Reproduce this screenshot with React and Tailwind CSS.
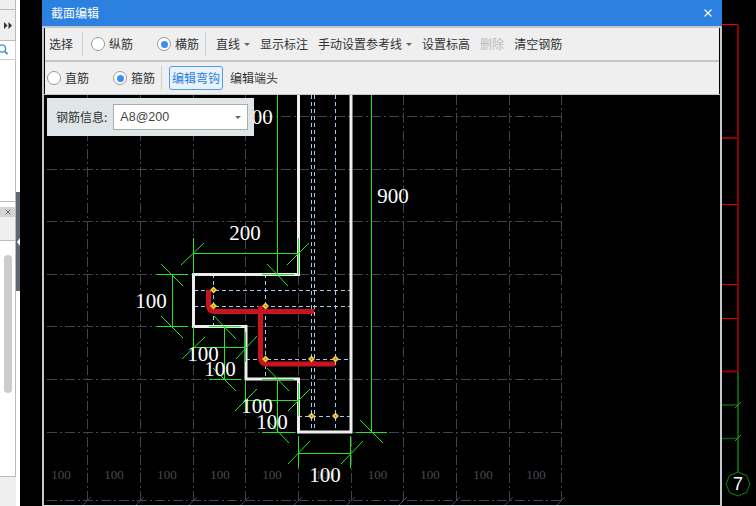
import { X } from "lucide-react";

const cjk = "font-['Noto_Sans_CJK_SC','Liberation_Sans',sans-serif]";

const gridX = [87, 140, 193, 245, 298, 351, 403, 456, 509, 561];
const gridY = [116, 169, 221, 274, 326, 379, 432, 500];
const grayLabels = [61, 114, 167, 220, 272, 325, 377.5, 430, 483, 536];

// snap straight lines onto a pixel so they stay sharp
const snap = ([x1, y1, x2, y2]) => {
  if (x1 === x2) return [Math.floor(x1) + 0.5, y1, Math.floor(x2) + 0.5, y2];
  if (y1 === y2) return [x1, Math.floor(y1) + 0.5, x2, Math.floor(y2) + 0.5];
  return [x1, y1, x2, y2];
};

// green dimension lines: [x1, y1, x2, y2]
const greenLines = [
  [277, 95, 277, 274], [371, 95, 371, 432],
  [193, 238, 193, 274], [298, 238, 298, 274], [193, 253, 298, 253],
  [181, 265, 204, 243], [287, 265, 309, 243],
  [262, 274, 294, 274], [267, 264, 288, 286],
  [172, 274, 172, 327], [157, 274, 188, 274], [157, 326, 188, 326],
  [161, 264, 183, 286], [161, 316, 183, 338],
  [209, 326, 241, 326], [224, 327, 224, 379], [214, 316, 236, 339],
  [209, 379, 241, 379], [213, 368, 236, 391],
  [193, 327, 193, 362], [245, 332, 245, 362], [193, 347, 246, 347],
  [182, 359, 205, 337], [236, 359, 257, 336],
  [245, 380, 245, 412], [298, 383, 298, 416], [246, 400, 298, 400],
  [235, 411, 257, 389], [288, 411, 310, 389],
  [277, 379, 277, 432], [262, 379, 294, 379], [267, 368, 289, 391],
  [262, 432, 295, 432], [267, 420, 289, 443],
  [356, 432, 387, 432], [360, 420, 383, 443],
  [298, 436, 298, 468], [350, 436, 350, 468], [298, 453, 350, 453],
  [288, 464, 310, 441], [341, 464, 363, 441],
].map(snap);

const refLines = [
  [311, 95, 311, 432], [314, 95, 314, 432], [335, 95, 335, 432],
  [194, 290, 350, 290], [194, 306, 350, 306],
  [246, 359, 350, 359], [298, 416, 350, 416],
  [213, 274, 213, 327], [265, 274, 265, 379],
].map(snap);

const nodes = [
  [213.5, 290], [213.5, 306], [265.5, 306], [265.5, 359], [311.5, 359], [335.5, 359], [311.5, 416], [335.5, 416],
];

const whiteLabels = [
  [257, 124, "200"], [245, 240, "200"], [393, 203, "900"], [151, 308, "100"],
  [203, 361, "100"], [220, 376, "100"], [257, 413, "100"], [272, 429, "100"], [325, 482, "100"],
];

const Radio = ({ checked }) => (
  <span className="flex h-[14px] w-[14px] items-center justify-center rounded-full border border-[#999] bg-white">
    {checked && <span className="h-[7px] w-[7px] rounded-full bg-[#3c8ef0]" />}
  </span>
);

const Caret = () => (
  <span className="ml-[4px] h-0 w-0 border-x-[3px] border-t-[3px] border-x-transparent border-t-[#666]" />
);

const Sep = ({ className }) => <span className={`h-[24px] w-px bg-[#d0d0d0] ${className}`} />;

const Sidebar = () => (
  <div className="flex h-full w-[16px] flex-col">
    <div className="h-[10px] border-r border-b border-[#bbb] bg-[#efefef]" />
    <div className="flex h-[31px] items-center justify-center border-r border-b border-[#bbb] bg-[#efefef] pt-[1px]">
      <svg width="8" height="7" viewBox="0 0 8 7">
        <path d="M0 0L3.5 3.5L0 7ZM4.5 0L8 3.5L4.5 7Z" fill="#333" />
      </svg>
    </div>
    <div className="flex h-[19px] items-center border-r border-b border-[#ccc] bg-white">
      <svg width="9" height="12" viewBox="0 0 9 12">
        <circle cx="2" cy="4.5" r="3.6" fill="none" stroke="#3a90d0" strokeWidth="1.4" />
        <path d="M4.8 7.3L7.5 10" stroke="#3a90d0" strokeWidth="1.8" />
      </svg>
    </div>
    <div className="h-[142px] border-r border-b border-[#bbb] bg-white" />
    <div className="h-[5px] border-r border-[#bbb] bg-white" />
    <div className="flex h-[10px] items-center justify-center border-r border-[#bbb] bg-[#d4d4d4]">
      <X size={8} strokeWidth={3} className="text-[#666]" />
    </div>
    <div className="h-[24px] border-r border-b border-[#bbb] bg-[#efefef]" />
    <div className="h-[236px] border-r border-b border-[#bbb] bg-white pt-[14px] pl-[4px]">
      <div className="h-[138px] w-[8px] rounded bg-[#ccc]" />
    </div>
    <div className="flex-1 bg-[#efefef]" />
  </div>
);

const Handle = () => (
  <div className="flex h-full w-[4px] flex-col">
    <div className="h-[192px] bg-white" />
    <div className="flex h-[99px] items-center justify-end bg-[#5b6975]">
      <span className="h-0 w-0 border-y-[4px] border-r-[3px] border-y-transparent border-r-white" />
    </div>
    <div className="flex-1 bg-white" />
  </div>
);

const Toolbar = () => (
  <div className={`mr-[1px] ml-[1px] flex flex-col gap-[2px] bg-[#c4c8cc] text-[12px] text-[#333] ${cjk}`}>
    <div className="flex h-[32px] items-center bg-[#efefef] pl-[4px]">
      <span>选择</span>
      <Sep className="ml-[9px]" />
      <span className="ml-[8px]"><Radio /></span>
      <span className="ml-[4px]">纵筋</span>
      <span className="ml-[24px]"><Radio checked /></span>
      <span className="ml-[4px]">横筋</span>
      <Sep className="ml-[6px]" />
      <span className="ml-[10px]">直线</span>
      <Caret />
      <span className="ml-[10px]">显示标注</span>
      <span className="ml-[10px]">手动设置参考线</span>
      <Caret />
      <span className="ml-[10px]">设置标高</span>
      <span className="ml-[10px] text-[#bbb]">删除</span>
      <span className="ml-[10px]">清空钢筋</span>
    </div>
    <div className="flex h-[32px] items-center bg-[#efefef] pl-[2px]">
      <Radio />
      <span className="ml-[4px]">直筋</span>
      <span className="ml-[24px]"><Radio checked /></span>
      <span className="ml-[4px]">箍筋</span>
      <Sep className="ml-[6px]" />
      <span className="ml-[7px] flex h-[24px] w-[54px] items-center justify-center rounded-[3px] border border-[#4a9cf0] bg-[#eaf3fd] text-[#2a80e0]">
        编辑弯钩
      </span>
      <span className="ml-[7px]">编辑端头</span>
    </div>
  </div>
);

const Canvas = () => (
  <div className="relative flex-1 overflow-hidden border-t border-b border-t-[#c4c8cc] border-b-[#d8dadd] bg-black">
    <svg width="676" height="410" viewBox="44 95 676 410" className="block">
      <g stroke="#3f4450" strokeWidth="1" strokeDasharray="10 3 2 3" fill="none">
        {gridX.map((x) => <line key={x} x1={x + 0.5} y1="95" x2={x + 0.5} y2="503" />)}
        {gridY.map((y) => <line key={y} x1="47" y1={y + 0.5} x2="562" y2={y + 0.5} />)}
      </g>
      <g stroke="#3f4450" strokeWidth="1">
        {gridX.map((x) => <line key={x} x1={x - 4} y1="505" x2={x + 4} y2="497" />)}
      </g>
      <g fill="#484b52" fontFamily="'Liberation Serif', serif" fontSize="13" textAnchor="middle">
        {grayLabels.map((x) => <text key={x} x={x} y="479">100</text>)}
      </g>
      <g stroke="#a8c8f0" strokeWidth="1" strokeDasharray="4 3" fill="none">
        {refLines.map((l, i) => <line key={i} x1={l[0]} y1={l[1]} x2={l[2]} y2={l[3]} />)}
      </g>
      <path
        d="M298.5 95V274.5H193.5V326.5H246V379H298.5V432H351V95"
        fill="none"
        stroke="#eeeeee"
        strokeWidth="3"
      />
      <g stroke="#22e622" strokeWidth="1" fill="none">
        {greenLines.map((l, i) => <line key={i} x1={l[0]} y1={l[1]} x2={l[2]} y2={l[3]} />)}
      </g>
      <g stroke="#c8141e" strokeWidth="5" fill="none">
        <path d="M208.5 290V305Q208.5 311.5 215 311.5H314" />
        <path d="M260.5 306V357Q260.5 364 267 364H335" />
      </g>
      {nodes.map(([x, y]) => (
        <g key={`${x}-${y}`}>
          <path d={`M${x} ${y - 3.5}L${x + 3.5} ${y}L${x} ${y + 3.5}L${x - 3.5} ${y}Z`} fill="#f6d040" />
          <circle cx={x} cy={y} r="1" fill="#b08020" />
        </g>
      ))}
      <g fill="#ffffff" fontFamily="'Liberation Serif', serif" fontSize="21" textAnchor="middle">
        {whiteLabels.map(([x, y, t]) => <text key={`${x}-${y}`} x={x} y={y}>{t}</text>)}
      </g>
    </svg>
    <div className={`absolute top-[3px] left-[3px] flex h-[38px] w-[207px] items-center bg-[#dfe6e8] pl-[9px] text-[12px] text-[#333] ${cjk}`}>
      <span>钢筋信息:</span>
      <div className="ml-[6px] flex h-[26px] w-[135px] items-center justify-between border border-[#aaa] bg-white pr-[6px] pl-[6px] font-['Liberation_Sans',sans-serif] text-[12.5px] text-[#444]">
        <span>A8@200</span>
        <span className="h-0 w-0 border-x-[3px] border-t-[3px] border-x-transparent border-t-[#666]" />
      </div>
    </div>
  </div>
);

const Dialog = () => (
  <div className="flex h-full w-[680px] flex-col border-x-2 border-[#c4c8cc]">
    <div className={`-mx-[2px] flex h-[26px] items-center justify-between bg-[#2c80e0] pr-[8px] pl-[9px] text-[12px] text-white ${cjk}`}>
      <span>截面编辑</span>
      <X size={12} strokeWidth={2.5} />
    </div>
    <div className="h-[2px] bg-[#c4c8cc]" />
    <Toolbar />
    <Canvas />
  </div>
);

// the floor list on the far right
const RightRail = () => (
  <svg width="34" height="506" viewBox="722 0 34 506" className="block">
    <path d="M722 24.5H738" stroke="#ff0000" fill="none" />
    <path d="M738 24V372" stroke="#8b0000" strokeWidth="2" fill="none" />
    <path d="M722 138H738M722 371.5H738" stroke="#8b0000" strokeWidth="2" fill="none" />
    <path d="M722 204.5H738M722 284.5H738M722 318.5H738" stroke="#e00000" fill="none" />
    <path d="M738 372V472" stroke="#0c5c0c" strokeWidth="2" fill="none" />
    <path d="M722 405H738M722 438.5H738" stroke="#0c5c0c" strokeWidth="1.5" fill="none" />
    <path d="M735 408L741 402M735 441L741 435" stroke="#1fa01f" fill="none" />
    <path
      d="M738 472L746.5 475.5L750 484L746.5 492.5L738 496L729.5 492.5L726 484L729.5 475.5Z"
      fill="black"
      stroke="#0c8a0c"
    />
    <text x="738" y="490" textAnchor="middle" fontSize="18" fill="#ffffff" fontFamily="'Liberation Sans', sans-serif">
      7
    </text>
  </svg>
);

export default function App() {
  return (
    <div className="flex h-[506px] w-[756px] overflow-hidden bg-black">
      <Sidebar />
      <Handle />
      <div className="w-[22px]" />
      <Dialog />
      <RightRail />
    </div>
  );
}
